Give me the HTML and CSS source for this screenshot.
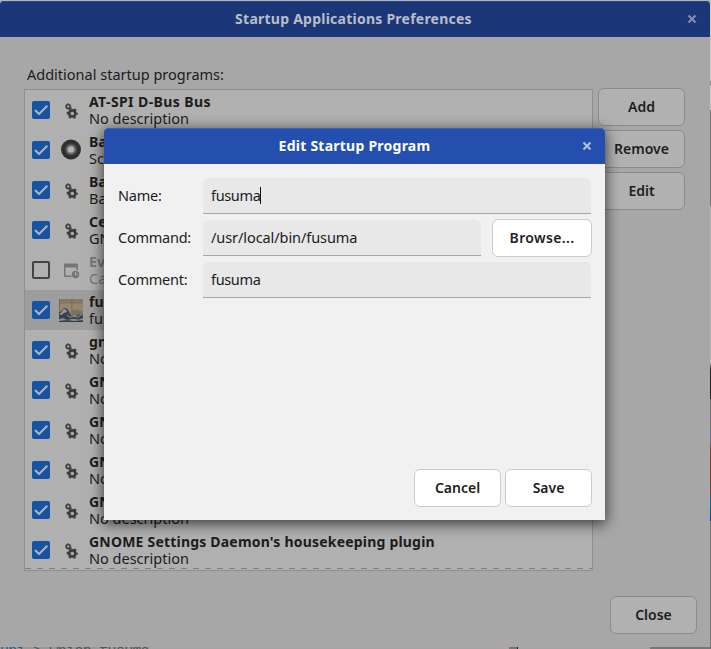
FILE: index.html
```html
<!DOCTYPE html>
<html lang="en">
<head>
<meta charset="utf-8">
<title>Startup Applications Preferences</title>
<link rel="stylesheet" href="styles.css">
</head>
<body>
<svg class="defs" aria-hidden="true">
  <symbol id="check" viewBox="0 0 18 18"><path d="M3 9l4 4L15.3 4.700" fill="none" stroke="#b3b3b3" stroke-width="2"/></symbol>
  <symbol id="gears" viewBox="0 0 14 17">
    <circle cx="3.200" cy="3.500" r="1.900" fill="none" stroke="#3b3b3b" stroke-width="1.500"/>
    <circle cx="3.200" cy="3.500" r="2.800" fill="none" stroke="#3b3b3b" stroke-width=".8" stroke-dasharray="1.470 1.470"/>
    <circle cx="7.300" cy="10.400" r="3.100" fill="none" stroke="#3b3b3b" stroke-width="2.700"/>
    <circle cx="7.300" cy="10.400" r="4.900" fill="none" stroke="#3b3b3b" stroke-width="1.400" stroke-dasharray="2.560 2.570" stroke-dashoffset="1.280"/>
  </symbol>
  <symbol id="cross" viewBox="0 0 10 10"><path d="M1.500 1.500l7 7M8.500 1.500l-7 7" fill="none" stroke="currentColor" stroke-width="2.100"/></symbol>
</svg>
<div class="desktop">
  <div class="window">
    <header class="titlebar"><h1>Startup Applications Preferences</h1><svg class="close"><use href="#cross"/></svg></header>
    <div class="content">
      <p class="caption">Additional startup programs:</p>
      <div class="main">
        <ul class="list">
          <li><span class="box on"><svg><use href="#check"/></svg></span><svg class="gears"><use href="#gears"/></svg><div><b class="wide">AT-SPI D-Bus Bus</b><span>No description</span></div></li>
          <li><span class="box on"><svg><use href="#check"/></svg></span><svg class="big" viewBox="0 0 24 24"><circle cx="11" cy="11.500" r="10" fill="#303030"/><circle cx="11" cy="11.500" r="6" fill="#4d4d4d"/><circle cx="11" cy="11.500" r="4.600" fill="#777"/><circle cx="11" cy="11.500" r="3" fill="#b4b4b4"/></svg><div><b>Ba</b><span>Sc</span></div></li>
          <li><span class="box on"><svg><use href="#check"/></svg></span><svg class="gears"><use href="#gears"/></svg><div><b>Ba</b><span>Ba</span></div></li>
          <li><span class="box on"><svg><use href="#check"/></svg></span><svg class="gears"><use href="#gears"/></svg><div><b>Ce</b><span>GN</span></div></li>
          <li class="off"><span class="box"></span><svg class="cal" viewBox="0 0 16 16"><path fill="#757575" fill-rule="evenodd" d="M1 .5h12a1 1 0 0 1 1 1V7h-1.500V4.500h-11V12.500h6V14H1a1 1 0 0 1-1-1V1.500a1 1 0 0 1 1-1z"/><circle cx="11.500" cy="11.500" r="3.700" fill="#757575"/><path d="M11.500 9v2.700h2.300" fill="none" stroke="#b0b0b0"/></svg><div><b>Ev</b><span>Ca</span></div></li>
          <li class="selected"><span class="box on"><svg><use href="#check"/></svg></span>
            <svg class="art" viewBox="0 0 24 24" preserveAspectRatio="none"><path fill="#94866f" d="M0 0h24v24H0z"/><path fill="#887861" d="M0 0h24v5H0z"/><path fill="#6f6453" d="M0 0h.8v24H0zM12.500 0h.8v16h-.8z"/><path fill="#777363" d="M13 12l4-1 7 2v4H13z"/><path fill="#364555" d="M0 14l3-2 2-3 3 1 2 3 2 4 4 1 4-2 4 1v7H0z"/><path fill="#8f9087" d="M1 15l2-2 2-3 2 1 1 2-3 1-1 2-3 1zM0 21l4-1 4 2 5-2 4 1 7-1v2l-9 1-7-1-8 1z"/><path stroke="#a7a491" stroke-width=".8" fill="none" d="M3 13l2 1 3-1M8 17l3 2 4-1 3 1 5-3"/><path stroke="#303c48" fill="none" d="M0 18l5-1 4 4 6-1 5 1 4-2M1 23.500h23"/></svg>
            <div><b>fu</b><span>fus</span></div></li>
          <li><span class="box on"><svg><use href="#check"/></svg></span><svg class="gears"><use href="#gears"/></svg><div><b>gn</b><span>No</span></div></li>
          <li><span class="box on"><svg><use href="#check"/></svg></span><svg class="gears"><use href="#gears"/></svg><div><b>GN</b><span>No</span></div></li>
          <li><span class="box on"><svg><use href="#check"/></svg></span><svg class="gears"><use href="#gears"/></svg><div><b>GN</b><span>No</span></div></li>
          <li><span class="box on"><svg><use href="#check"/></svg></span><svg class="gears"><use href="#gears"/></svg><div><b>GN</b><span>No</span></div></li>
          <li><span class="box on"><svg><use href="#check"/></svg></span><svg class="gears"><use href="#gears"/></svg><div><b>GN</b><span>No description</span></div></li>
          <li class="last"><span class="box on"><svg><use href="#check"/></svg></span><svg class="gears"><use href="#gears"/></svg><div><b>GNOME Settings Daemon's housekeeping plugin</b><span>No description</span></div></li>
        </ul>
        <div class="actions"><button>Add</button><button>Remove</button><button>Edit</button></div>
      </div>
      <div class="footer"><button>Close</button></div>
    </div>
  </div>
  <div class="edge"></div>
  <div class="terminal"><i>unı</i><span>&gt; which fusuma</span></div>
</div>
<div class="dialog">
  <header class="titlebar"><h2>Edit Startup Program</h2><svg class="close"><use href="#cross"/></svg></header>
  <div class="form">
    <label>Name:</label><div class="field"><span class="entry">fusuma</span><i class="caret"></i></div>
    <label>Command:</label><div class="pair"><div class="field"><span class="path">/usr/local/bin/fusuma</span></div><button>Browse...</button></div>
    <label>Comment:</label><div class="field"><span class="entry">fusuma</span></div>
  </div>
  <div class="buttons"><button>Cancel</button><button>Save</button></div>
</div>
</body>
</html>
```
FILE: styles.css
```css
* { box-sizing: border-box; }
body { margin: 0; width: 711px; height: 649px; overflow: hidden; position: relative; background: #b7b5b2; font: 14.5px/17px "Noto Sans", "Open Sans", sans-serif; color: #1c1c1c; }
.defs { position: absolute; width: 0; height: 0; }
h1, h2, p, ul { margin: 0; padding: 0; }
.desktop { display: grid; grid-template: 1px 646px 2px / 710px 1px; height: 649px; }
.window { grid-area: 2 / 1; background: #a7a7a7; border-radius: 4px 4px 0 0; overflow: hidden; }
.titlebar { height: 36px; display: grid; grid-template-columns: 1fr 36px; align-items: center; background: #1b3778; color: #b9bdc7; border-top: 1px solid #294583; }
.titlebar h1, .titlebar h2 { grid-area: 1 / 1 / 2 / 3; text-align: center; font-size: 14px; line-height: 18px; font-weight: 700; letter-spacing: .24px; padding-bottom: 2px; }
.titlebar h1 { padding-right: 3px; }
.close { grid-area: 1 / 2; width: 10px; height: 10px; justify-self: center; color: #8590ad; margin-bottom: 1px; }
.content { padding: 28px 13px 13px 24px; }
.caption { padding-left: 3px; height: 23px; line-height: 19px; }
.main { display: flex; gap: 5px; align-items: flex-start; }
.list { width: 569px; height: 482px; margin-top: 1px; border: 1px solid #8f8f8f; background: #b0b0b0; list-style: none; }
.list li { height: 40px; display: grid; grid-template-columns: 26px 31px 1fr; align-items: center; padding-left: 7px; }
.list li > svg { justify-self: start; }
.list li div { height: 34px; white-space: nowrap; align-self: start; margin-top: 3px; }
.list b, .list li div span { display: block; height: 17px; line-height: 17px; }
.list b { font-size: 14px; letter-spacing: .2px; }
.list .wide { letter-spacing: .4px; }
.list .off { color: #777; }
.list .selected { background: #9d9d9d; }
.list .last { background: repeating-linear-gradient(90deg, #808080 0 6px, transparent 6px 12px) 0 38px / 100% 1px no-repeat; }
.box { width: 18px; height: 18px; border: 2px solid #444; border-radius: 2px; }
.box.on { border: 0; background: #1553a5; }
.box svg { width: 18px; height: 18px; display: block; }
.gears { width: 14px; height: 17px; margin: 3px 0 0 7px; }
.big { width: 24px; height: 24px; margin-left: 2px; }
.cal { width: 16px; height: 16px; margin-left: 6px; margin-top: 1px; }
.art { width: 24px; height: 23px; margin-left: 1px; }
button { width: 87px; height: 38px; padding: 0; border: 1px solid #8b8b8b; border-radius: 6px; background: #b1b1b1; color: #1e1e1e; font: 600 14px/18px "Noto Sans", "Open Sans", sans-serif; display: block; }
.actions { display: grid; gap: 4px; }
.footer { display: flex; justify-content: flex-end; padding-top: 25px; }
.edge { grid-area: 2 / 2; background: linear-gradient(#c9c9c9 0 80px, #888 80px 84px, #c9c9c9 84px 109px, #777 109px 205px, #b5b5b5 205px 362px, #222 368px 398px, #6f7078 398px 428px, #65718a 428px 440px, #74462e 449px 490px, #087099 499px 508px, #174581 515px 520px, #777 520px); }
.terminal { grid-area: 3 / 1 / 4 / 3; height: 2px; overflow: hidden; background: linear-gradient(90deg, #999 0 149px, #aaa5a5 149px 509px, #777 509px 517px, #222 517px 518px, #aaa5a5 518px 650px, #777 650px); font: 15px/18px "Liberation Mono", monospace; letter-spacing: -.7px; color: #555; display: flex; gap: 8px; }
.terminal i, .terminal span { margin-top: -4px; }
.terminal i { color: #315b78; font-style: normal; }
.dialog { position: absolute; left: 104px; top: 128px; width: 501px; height: 392px; background: #f1f1f1; border-radius: 4px 4px 0 0; box-shadow: 0 3px 14px 1px rgba(0,0,0,.65); }
.dialog .titlebar { background: #244fae; color: #fff; border-radius: 4px 4px 0 0; border-top-color: #3b61b6; }
.dialog .close { color: #b3c1e3; }
.form { display: grid; grid-template-columns: 85px 388px; row-gap: 6px; padding: 14px 14px 0; align-items: center; height: 134px; }
.form label { white-space: nowrap; letter-spacing: -.25px; padding-bottom: 2px; }
.field { height: 36px; flex: 1; display: flex; align-items: center; padding-left: 8px; background: #e8e8e8; border-bottom: 1px solid #a6a6a6; border-radius: 6px 6px 0 0; }
.entry { letter-spacing: -.35px; }
.path { letter-spacing: -.08px; }
.pair { display: flex; gap: 11px; height: 36px; align-items: center; margin-right: -1px; }
.caret { width: 1px; height: 17px; background: #111; }
.dialog button { background: #fff; border-color: #ccc; }
.dialog .pair button { width: 100px; letter-spacing: .35px; }
.buttons { display: flex; gap: 4px; justify-content: flex-end; padding: 171px 13px 0; }
```
